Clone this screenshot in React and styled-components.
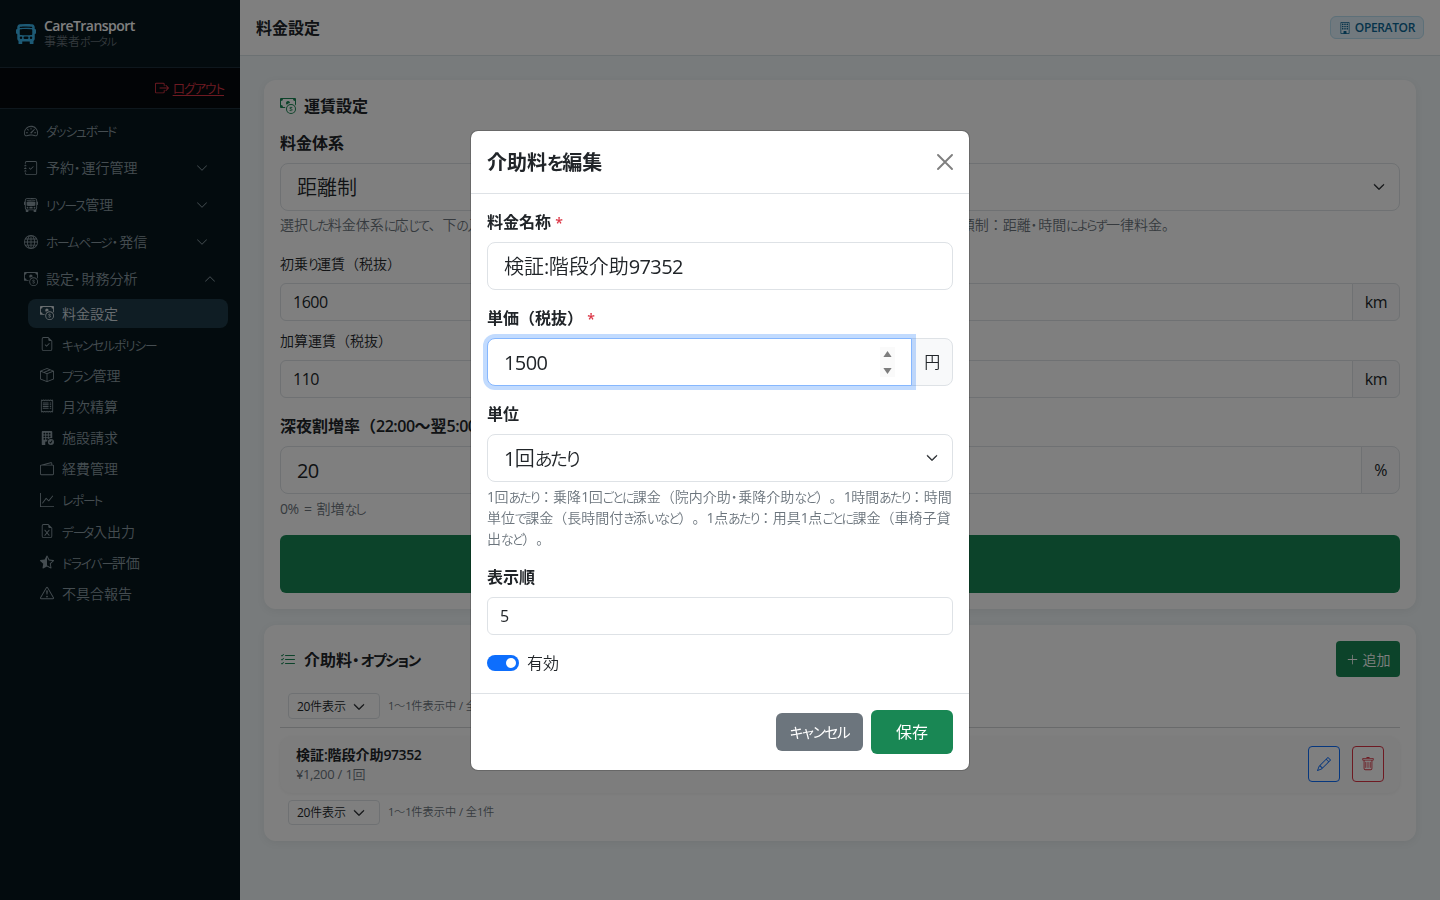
import React from "react";
import styled, { createGlobalStyle, css } from "styled-components";
import {
  BsBusFront, BsBoxArrowRight, BsSpeedometer2, BsJournalCheck, BsBusFrontFill,
  BsGlobe, BsCashCoin, BsFileEarmarkCheck, BsBoxSeam, BsReceipt, BsBuildingFillCheck,
  BsWallet2, BsGraphUp, BsFileEarmarkExcel, BsStarHalf, BsExclamationTriangle,
  BsChevronDown, BsChevronUp, BsBuilding, BsListCheck, BsPlusLg, BsPencil, BsTrash,
} from "react-icons/bs";

const Global = createGlobalStyle`
  *, *::before, *::after { box-sizing: border-box; }
  html, body, #root { height: 100%; }
  body {
    --latin-weight: 400;
    margin: 0;
    overflow: hidden;
    color: #212529;
    font-family: "Open Sans", "Noto Sans CJK JP", sans-serif;
    font-size: 16px;
    font-weight: 350;
    line-height: 1.5;
    text-spacing-trim: space-all;
  }
  svg { display: block; flex: none; }
`;

const strong = css`
  --latin-weight: 600;
  font-weight: 600;
`;

/* Text runs: kana is set proportionally, smaller and tighter than kanji. */
const Kana = styled.span`
  font-feature-settings: "palt";
  font-size: 0.91em;
  line-height: 1;
  letter-spacing: ${(p) => p.$ls}em;
`;
const Latin = styled.span`
  font-weight: var(--latin-weight);
  letter-spacing: -0.03em;
`;
const RUNS = /ー+|・|[\u3041-\u309f]+|[\u30a1-\u30fa]+|[\x21-\x7e¥]+|[^\u3041-\u30ff\x21-\x7e¥]+/g;
function T({ children }) {
  return (
    <span>
      {children.match(RUNS).map((r, i) => {
        if (r[0] === "ー") return <Kana $ls={-0.18} key={i}>{r}</Kana>;
        if (r === "・") return <Kana $ls={0.09} key={i}>{r}</Kana>;
        if (/^[\u3041-\u309f]/.test(r)) return <Kana $ls={-0.12} key={i}>{r}</Kana>;
        if (/^[\u30a1-\u30fa]/.test(r)) return <Kana $ls={-0.09} key={i}>{r}</Kana>;
        if (/^[\x21-\x7e¥]/.test(r)) return <Latin key={i}>{r}</Latin>;
        return r;
      })}
    </span>
  );
}

const Page = styled.div`
  display: grid;
  grid-template-columns: 240px 1fr;
  height: 900px;
  background: #f0f6f8;
`;

/* Sidebar */
const Sidebar = styled.aside`
  background: #06161c;
  display: flex;
  flex-direction: column;
`;
const Brand = styled.div`
  height: 68px;
  padding: 0 16px;
  display: flex;
  align-items: center;
  gap: 8px;
  border-bottom: 1px solid #1d2f3a;
  > svg { color: #3bb4ea; width: 20px; height: 20px; }
`;
const BrandText = styled.div`
  display: flex;
  flex-direction: column;
  padding-bottom: 1px;
`;
const BrandName = styled.div`
  font-size: 14px;
  font-weight: 600;
  line-height: 17px;
  color: #fff;
  letter-spacing: -0.038em;
`;
const BrandSub = styled.div`
  font-size: 12px;
  line-height: 16px;
  color: #66737a;
`;
const LogoutRow = styled.div`
  height: 41px;
  padding: 0 16px 1px;
  display: flex;
  align-items: center;
  justify-content: flex-end;
  gap: 4px;
  background: #04090d;
  border-bottom: 1px solid #1d2f3a;
  color: #dc3545;
  font-size: 14px;
  > span { text-decoration: underline; text-underline-offset: 2px; }
`;
const Nav = styled.nav`
  padding: 3px 12px 0;
  display: flex;
  flex-direction: column;
`;
const NavItem = styled.div`
  height: 37px;
  padding: 0 ${(p) => (p.$open ? 12 : 20)}px 0 12px;
  display: flex;
  align-items: center;
  gap: 8px;
  font-size: 14px;
  color: #8b9ba3;
  > span { flex: 1; }
  > svg:first-child { width: 14px; height: 14px; }
  > svg:last-child { width: 12px; height: 12px; }
`;
const SubNav = styled.div`
  margin-left: 16px;
  margin-top: 2px;
  display: flex;
  flex-direction: column;
  gap: 2px;
`;
const SubItem = styled.div`
  height: 29.15px;
  padding: 0 12px 1px;
  display: flex;
  align-items: center;
  gap: 8px;
  border-radius: 8px;
  font-size: 14px;
  color: ${(p) => (p.$active ? "#d4dde2" : "#8b9ba3")};
  background: ${(p) => (p.$active ? "#1f3b48" : "transparent")};
  > svg { width: 14px; height: 14px; }
`;

/* Main column */
const Main = styled.main`
  display: flex;
  flex-direction: column;
  min-width: 0;
`;
const TopBar = styled.header`
  height: 56px;
  padding: 0 16px;
  background: #fff;
  border-bottom: 1px solid #d8e2e7;
  display: flex;
  align-items: center;
  justify-content: space-between;
`;
const PageTitle = styled.h1`
  ${strong}
  margin: 0;
  font-size: 16px;
`;
const RoleBadge = styled.div`
  height: 23px;
  padding: 0 8px;
  display: flex;
  align-items: center;
  gap: 4px;
  border: 1px solid #bae0f2;
  border-radius: 6px;
  background: #e3f3fc;
  color: #0b6796;
  font-size: 12px;
  font-weight: 600;
  letter-spacing: -0.03em;
`;
const Content = styled.div`
  padding: 24px;
  display: flex;
  flex-direction: column;
  gap: 16px;
`;
const Card = styled.section`
  background: #fff;
  border-radius: 12px;
  padding: 16px;
  box-shadow: 0 2px 8px rgba(0, 0, 0, 0.06);
  display: flex;
  flex-direction: column;
`;
const CardTitle = styled.h2`
  ${strong}
  margin: 0;
  height: 19px;
  display: flex;
  align-items: center;
  gap: 8px;
  font-size: 16px;
  > svg { color: #198754; }
`;
const FareTitle = styled(CardTitle)`
  margin-bottom: 16px;
`;
const OptionsTitle = styled(CardTitle)`
  margin-top: 1px;
`;
const Label = styled.div`
  ${strong}
  height: 24px;
  line-height: 24px;
  margin-bottom: 8px;
  font-size: 16px;
  white-space: nowrap;
`;
const SmallLabel = styled(Label)`
  height: 21px;
  line-height: 20px;
  font-size: 14px;
  font-weight: 350;
`;
const Required = styled.span`
  color: #dc3545;
  font-weight: 600;
  font-size: 14px;
`;
const fieldBox = css`
  display: flex;
  align-items: center;
  background: #fff;
  border: 1px solid #dee2e6;
  height: ${(p) => (p.$lg ? 48 : 38)}px;
  padding: ${(p) => (p.$lg ? "2px 16px 0" : "0 12px")};
  font-size: ${(p) => (p.$lg ? 20 : 16)}px;
  border-radius: ${(p) => (p.$lg ? 8 : 6)}px;
`;
const Field = styled.div`
  ${fieldBox}
  flex: none;
`;
const SelectField = styled(Field)`
  justify-content: space-between;
  padding-right: 14px;
  > svg { width: 12px; height: 12px; stroke-width: 1; margin-bottom: 2px; }
`;
const Group = styled.div`
  display: flex;
`;
const GroupField = styled.div`
  ${fieldBox}
  flex: 1;
  justify-content: space-between;
  border-top-right-radius: 0;
  border-bottom-right-radius: 0;
  ${(p) => p.$focus && css`
    border-color: #86b7fe;
    box-shadow: 0 0 0 4px rgba(13, 110, 253, 0.25);
    position: relative;
    z-index: 1;
  `}
`;
const Addon = styled.div`
  ${fieldBox}
  justify-content: center;
  padding: 0;
  width: ${(p) => p.$w}px;
  margin-left: -1px;
  font-size: 16px;
  letter-spacing: -0.03em;
  font-weight: ${(p) => (p.$jp ? 350 : 400)};
  background: #f8f9fa;
  border-top-left-radius: 0;
  border-bottom-left-radius: 0;
`;
const Help = styled.div`
  margin-top: 4px;
  font-size: 14px;
  line-height: 21px;
  color: #6c757d;
  white-space: nowrap;
`;
const ZeroHelp = styled(Help)`
  word-spacing: 1.5px;
`;
const SplitHelp = styled(Help)`
  width: 896px;
  line-height: 20px;
  padding-bottom: 1px;
  display: flex;
  justify-content: space-between;
`;
const Stack = styled.div`
  display: flex;
  flex-direction: column;
  margin-bottom: ${(p) => p.$mb ?? 16}px;
`;
const SaveWide = styled.div`
  height: 58px;
  border-radius: 6px;
  background: #198754;
  color: #fff;
  display: flex;
  align-items: center;
  justify-content: center;
  font-size: 20px;
`;

const OptionsHead = styled.div`
  height: 36px;
  display: flex;
  align-items: center;
  justify-content: space-between;
  margin-bottom: 16px;
`;
const AddButton = styled.div`
  width: 64px;
  height: 36px;
  border-radius: 4px;
  background: #198754;
  color: #fff;
  font-size: 14px;
  display: flex;
  align-items: center;
  justify-content: center;
  gap: 4px;
`;
const Pager = styled.div`
  height: ${(p) => p.$h}px;
  padding-left: 8px;
  display: flex;
  align-items: center;
  gap: 8px;
  font-size: 11.2px;
  color: #6c757d;
`;
const PageSize = styled.div`
  width: 92px;
  height: 100%;
  padding: 1px 14px 0 8px;
  border: 1px solid #dee2e6;
  border-radius: 4px;
  display: flex;
  align-items: center;
  justify-content: space-between;
  font-size: 12px;
  color: #212529;
  > svg { width: 12px; height: 12px; stroke-width: 1; }
`;
const Divider = styled.div`
  height: 1px;
  margin: 8px 0;
  background: #d3d5d7;
`;
const OptionRow = styled.div`
  height: 57px;
  margin-bottom: 7px;
  padding: 0 16px 1px;
  border-radius: 12px;
  background: #fafafa;
  box-shadow: 0 1px 4px rgba(0, 0, 0, 0.06);
  display: flex;
  align-items: center;
  gap: 12px;
`;
const OptionText = styled.div`
  flex: 1;
`;
const OptionName = styled.div`
  ${strong}
  font-size: 14px;
  line-height: 21px;
`;
const OptionPrice = styled.div`
  font-size: 13px;
  line-height: 19px;
  color: #6c757d;
`;
const IconButton = styled.div`
  width: 32px;
  height: 36px;
  border: 1px solid currentColor;
  border-radius: 4px;
  background: #fff;
  color: ${(p) => p.$color};
  display: flex;
  align-items: center;
  justify-content: center;
`;

/* Dialog */
const Backdrop = styled.div`
  position: fixed;
  inset: 0;
  background: rgba(0, 0, 0, 0.5);
  display: flex;
  justify-content: center;
  align-items: flex-start;
  padding-top: 130px;
`;
const Dialog = styled.div`
  width: 500px;
  border: 1px solid rgba(0, 0, 0, 0.175);
  border-radius: 8px;
  background: #fff;
  background-clip: padding-box;
`;
const DialogHead = styled.div`
  ${strong}
  height: 63px;
  padding: 0 16px;
  border-bottom: 1px solid #dee2e6;
  display: flex;
  align-items: center;
  justify-content: space-between;
  font-size: 20px;
  > span { padding-top: 2px; }
`;
const DialogBody = styled.div`
  padding: 16px 16px 18px;
`;
const DialogFoot = styled.div`
  height: 77px;
  padding: 0 16px;
  border-top: 1px solid #dee2e6;
  display: flex;
  align-items: center;
  justify-content: flex-end;
  gap: 8px;
`;
const Button = styled.div`
  width: ${(p) => p.$w}px;
  height: ${(p) => p.$h}px;
  background: ${(p) => p.$bg};
  border-radius: 6px;
  color: #fff;
  font-size: 16px;
  font-weight: 400;
  display: flex;
  align-items: center;
  justify-content: center;
`;
const Spinner = styled.div`
  width: 15px;
  height: 30px;
  margin-bottom: 2px;
  background: #fafafa;
  display: flex;
  flex-direction: column;
  align-items: center;
  justify-content: space-between;
  padding: 4px 0 3px;
`;
const SwitchRow = styled.div`
  height: 24px;
  display: flex;
  align-items: center;
  gap: 8px;
`;
const Switch = styled.div`
  width: 32px;
  height: 16px;
  border-radius: 8px;
  background: #0d6efd;
  padding: 3px;
  display: flex;
  justify-content: flex-end;
`;
const Knob = styled.div`
  width: 10px;
  height: 10px;
  border-radius: 50%;
  background: #fff;
`;

const NAV = [
  [BsSpeedometer2, "ダッシュボード", null],
  [BsJournalCheck, "予約・運行管理", "down"],
  [BsBusFront, "リソース管理", "down"],
  [BsGlobe, "ホームページ・発信", "down"],
  [BsCashCoin, "設定・財務分析", "up"],
];
const SUB = [
  [BsCashCoin, "料金設定"],
  [BsFileEarmarkCheck, "キャンセルポリシー"],
  [BsBoxSeam, "プラン管理"],
  [BsReceipt, "月次精算"],
  [BsBuildingFillCheck, "施設請求"],
  [BsWallet2, "経費管理"],
  [BsGraphUp, "レポート"],
  [BsFileEarmarkExcel, "データ入出力"],
  [BsStarHalf, "ドライバー評価"],
  [BsExclamationTriangle, "不具合報告"],
];

function SidePanel() {
  return (
    <Sidebar>
      <Brand>
        <BsBusFrontFill />
        <BrandText>
          <BrandName>CareTransport</BrandName>
          <BrandSub><T>事業者ポータル</T></BrandSub>
        </BrandText>
      </Brand>
      <LogoutRow><BsBoxArrowRight size={14} /><T>ログアウト</T></LogoutRow>
      <Nav>
        {NAV.map(([Icon, text, arrow]) => (
          <NavItem key={text} $open={arrow === "up"}>
            <Icon />
            <T>{text}</T>
            {arrow === "down" && <BsChevronDown />}
            {arrow === "up" && <BsChevronUp />}
          </NavItem>
        ))}
        <SubNav>
          {SUB.map(([Icon, text], i) => (
            <SubItem key={text} $active={i === 0}><Icon /><T>{text}</T></SubItem>
          ))}
        </SubNav>
      </Nav>
    </Sidebar>
  );
}

function PagerBar({ h }) {
  return (
    <Pager $h={h}>
      <PageSize><T>20件表示</T><BsChevronDown /></PageSize>
      <T>1〜1件表示中 / 全1件</T>
    </Pager>
  );
}

function EditDialog() {
  return (
    <Backdrop>
      <Dialog role="dialog">
        <DialogHead>
          <T>介助料を編集</T>
          <svg width="16" height="16" viewBox="0 0 16 16" stroke="#7f7f7f" strokeWidth="1.9" strokeLinecap="round">
            <path d="M1 1l14 14M15 1L1 15" />
          </svg>
        </DialogHead>
        <DialogBody>
          <Stack>
            <Label><T>料金名称</T> <Required>*</Required></Label>
            <Field $lg><T>検証:階段介助97352</T></Field>
          </Stack>
          <Stack>
            <Label><T>単価（税抜）</T> <Required>*</Required></Label>
            <Group>
              <GroupField $lg $focus>
                <T>1500</T>
                <Spinner>
                  <svg width="9" height="6" viewBox="0 0 9 6" fill="#7d7d7d"><path d="M4.5 0L8.6 6H.4z" /></svg>
                  <svg width="9" height="6" viewBox="0 0 9 6" fill="#7d7d7d"><path d="M4.5 6L8.6 0H.4z" /></svg>
                </Spinner>
              </GroupField>
              <Addon $lg $jp $w={42}>円</Addon>
            </Group>
          </Stack>
          <Stack>
            <Label>単位</Label>
            <SelectField $lg><T>1回あたり</T><BsChevronDown /></SelectField>
            <Help>
              <T>1回あたり：乗降1回ごとに課金（院内介助・乗降介助など）。1時間あたり：時間</T><br />
              <T>単位で課金（長時間付き添いなど）。1点あたり：用具1点ごとに課金（車椅子貸</T><br />
              <T>出など）。</T>
            </Help>
          </Stack>
          <Stack>
            <Label>表示順</Label>
            <Field><T>5</T></Field>
          </Stack>
          <SwitchRow><Switch><Knob /></Switch>有効</SwitchRow>
        </DialogBody>
        <DialogFoot>
          <Button $w={87} $h={38} $bg="#6c757d"><T>キャンセル</T></Button>
          <Button $w={82} $h={44} $bg="#198754">保存</Button>
        </DialogFoot>
      </Dialog>
    </Backdrop>
  );
}

export default function App() {
  return (
    <>
      <Global />
      <Page>
        <SidePanel />
        <Main>
          <TopBar>
            <PageTitle>料金設定</PageTitle>
            <RoleBadge><BsBuilding size={12} />OPERATOR</RoleBadge>
          </TopBar>
          <Content>
            <Card>
              <FareTitle><BsCashCoin size={16} />運賃設定</FareTitle>
              <Stack $mb={18}>
                <Label>料金体系</Label>
                <SelectField $lg>距離制<BsChevronDown /></SelectField>
                <SplitHelp>
                  <T>選択した料金体系に応じて、下の入力欄が切り替わります。</T>
                  <T>定額制：距離・時間によらず一律料金。</T>
                </SplitHelp>
              </Stack>
              <Stack $mb={10}>
                <SmallLabel><T>初乗り運賃（税抜）</T></SmallLabel>
                <Group><GroupField><T>1600</T></GroupField><Addon $w={48}>km</Addon></Group>
              </Stack>
              <Stack>
                <SmallLabel><T>加算運賃（税抜）</T></SmallLabel>
                <Group><GroupField><T>110</T></GroupField><Addon $w={48}>km</Addon></Group>
              </Stack>
              <Stack>
                <Label><T>深夜割増率（22:00〜翌5:00）</T></Label>
                <Group><GroupField $lg><T>20</T></GroupField><Addon $lg $w={39}>%</Addon></Group>
                <ZeroHelp><T>0% = 割増なし</T></ZeroHelp>
              </Stack>
              <SaveWide>保存</SaveWide>
            </Card>
            <Card>
              <OptionsHead>
                <OptionsTitle><BsListCheck size={16} /><T>介助料・オプション</T></OptionsTitle>
                <AddButton><BsPlusLg size={13} />追加</AddButton>
              </OptionsHead>
              <PagerBar h={26} />
              <Divider />
              <OptionRow>
                <OptionText>
                  <OptionName><T>検証:階段介助97352</T></OptionName>
                  <OptionPrice><T>¥1,200 / 1回</T></OptionPrice>
                </OptionText>
                <IconButton $color="#0d6efd"><BsPencil size={14} /></IconButton>
                <IconButton $color="#dc3545"><BsTrash size={14} /></IconButton>
              </OptionRow>
              <PagerBar h={25} />
            </Card>
          </Content>
        </Main>
      </Page>
      <EditDialog />
    </>
  );
}
